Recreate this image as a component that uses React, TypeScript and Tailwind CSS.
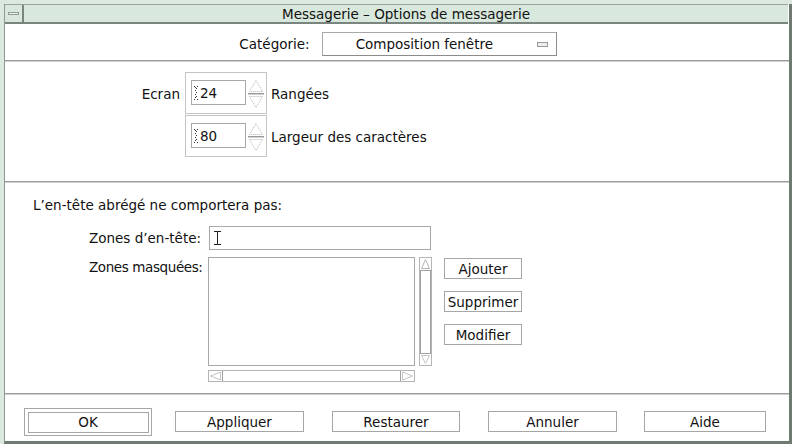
import React from 'react';

function Sep() {
  return (
    <div className="h-[2px] flex flex-col">
      <div className="h-px bg-[#9c9c9c]" />
      <div className="h-px bg-[#d0d0d0]" />
    </div>
  );
}

function Btn({ label, w, cls = '' }: { label: string; w: string; cls?: string }) {
  return (
    <div className={`${w} h-[21px] border border-[#a6a6a6] bg-white flex items-center justify-center leading-[16px] whitespace-nowrap ${cls}`}>
      {label}
    </div>
  );
}

function Caret() {
  return (
    <svg width="5" height="14" viewBox="0 0 5 14" className="shrink-0">
      <g fill="#333">
        <rect x="0" y="0" width="1" height="1" />
        <rect x="3" y="0" width="1" height="1" />
        <rect x="1" y="1" width="1" height="1" />
        <rect x="2" y="2" width="1" height="1" />
        <rect x="1" y="4" width="1" height="1" />
        <rect x="2" y="6" width="1" height="1" />
        <rect x="1" y="8" width="1" height="1" />
        <rect x="2" y="10" width="1" height="1" />
        <rect x="1" y="11" width="1" height="1" />
        <rect x="0" y="13" width="1" height="1" />
        <rect x="3" y="13" width="1" height="1" />
      </g>
    </svg>
  );
}

function Spinner({ value }: { value: string }) {
  return (
    <div className="w-[82px] h-[42px] border border-[#c4c4c4] flex items-start pt-[7px] pl-[5px]">
      <div className="w-[55px] h-[25px] border border-[#a8a8a8] flex items-center pl-[2px] gap-[1px] leading-[16px]">
        <Caret />
        <span>{value}</span>
      </div>
      <svg width="16" height="30" viewBox="0 0 16 30" className="ml-[2px] -mt-[1px]">
        <polygon points="8,1.5 1.5,12.5 14.5,12.5" fill="none" stroke="#b4b4b4" strokeDasharray="1 1" />
        <line x1="0" y1="14.5" x2="16" y2="14.5" stroke="#9a9a9a" />
        <line x1="0" y1="15.5" x2="16" y2="15.5" stroke="#d0d0d0" />
        <polygon points="1.5,17.5 14.5,17.5 8,28.5" fill="none" stroke="#b4b4b4" strokeDasharray="1 1" />
      </svg>
    </div>
  );
}

export default function App() {
  return (
    <div className="w-[792px] h-[444px] bg-[#dbe9de] pl-[4px] pt-[4px] font-['DejaVu_Sans',sans-serif] text-[13.5px] text-[#111] overflow-hidden">
      <div className="w-[788px] h-[440px] flex flex-col border-l border-[#8f9a93] border-r-[3px] border-r-[#6f7a73] border-b-[3px] border-b-[#6f7a73] bg-white">
        {/* title bar */}
        <div className="h-[20px] flex border-t border-[#9aa59e] border-b-2 border-b-[#7b857f] bg-[#d9e8dc] mr-[1px]">
          <div className="w-[19px] border-r-2 border-r-[#7b857f] flex items-center justify-center">
            <div className="w-[11px] h-[3px] border border-[#8f9a93] bg-[#eef5ef]" />
          </div>
          <div className="flex-1 flex items-center justify-center leading-[16px]">Messagerie – Options de messagerie</div>
        </div>

        {/* category */}
        <div className="h-[36px] flex items-start justify-center pt-[8px] pl-[2px]">
          <div className="h-[24px] flex items-center leading-[16px]">Catégorie:</div>
          <div className="ml-[12px] w-[235px] h-[24px] border border-[#a8a8a8] border-r-[#8c8c8c] border-b-[#8c8c8c] flex items-center leading-[16px]">
            <span className="ml-[33px]">Composition fenêtre</span>
            <div className="ml-auto mr-[8px] w-[11px] h-[5px] border border-[#9a9a9a] bg-[#eeeeee]" />
          </div>
        </div>
        <Sep />

        {/* screen */}
        <div className="h-[119px] flex flex-col pt-[10px]">
          <div className="flex items-center">
            <div className="w-[175px] text-right leading-[16px] pt-[2px]">Ecran</div>
            <div className="ml-[5px]"><Spinner value="24" /></div>
            <div className="ml-[4px] leading-[16px] pt-[2px]">Rangées</div>
          </div>
          <div className="flex items-center mt-[1px]">
            <div className="w-[175px]" />
            <div className="ml-[5px]"><Spinner value="80" /></div>
            <div className="ml-[4px] leading-[16px] pt-[2px]">Largeur des caractères</div>
          </div>
        </div>
        <Sep />

        {/* header options */}
        <div className="h-[210px] flex flex-col pt-[14px]">
          <div className="ml-[28px] leading-[16px]">L’en-tête abrégé ne comportera pas:</div>
          <div className="flex items-center mt-[13px]">
            <div className="ml-[84px] w-[119px] leading-[16px] whitespace-nowrap">Zones d’en-tête:</div>
            <div className="ml-[1px] w-[222px] h-[24px] border border-[#a8a8a8] flex items-center pl-[4px]">
              <svg width="7" height="14" viewBox="0 0 7 14">
                <g fill="#222">
                  <rect x="0" y="0" width="7" height="1" />
                  <rect x="3" y="0" width="1" height="14" />
                  <rect x="0" y="13" width="7" height="1" />
                </g>
              </svg>
            </div>
          </div>
          <div className="flex items-start mt-[7px]">
            <div className="ml-[84px] w-[119px] mt-[2px] leading-[16px] whitespace-nowrap tracking-[-0.4px]">Zones masquées:</div>
            <div className="flex flex-col">
              <div className="flex">
                <div className="w-[207px] h-[109px] border border-[#a8a8a8]" />
                <div className="ml-[4px] w-[13px] h-[109px] border border-[#b4b4b4] flex flex-col">
                  <svg width="11" height="12" viewBox="0 0 11 12">
                    <polygon points="5.5,1.5 1.5,10.5 9.5,10.5" fill="none" stroke="#b4b4b4" />
                  </svg>
                  <div className="flex-1 border-t border-b border-[#a0a0a0] border-l border-r" />
                  <svg width="11" height="11" viewBox="0 0 11 11">
                    <polygon points="1.5,1.5 9.5,1.5 5.5,9.5" fill="none" stroke="#c4c4c4" />
                  </svg>
                </div>
              </div>
              <div className="mt-[4px] w-[207px] h-[12px] border border-[#b4b4b4] flex">
                <svg width="13" height="10" viewBox="0 0 13 10">
                  <polygon points="1.5,5 11.5,1 11.5,9" fill="none" stroke="#c4c4c4" />
                </svg>
                <div className="flex-1 border-l border-r border-[#a0a0a0]" />
                <svg width="13" height="10" viewBox="0 0 13 10">
                  <polygon points="11.5,5 1.5,1 1.5,9" fill="none" stroke="#c4c4c4" />
                </svg>
              </div>
            </div>
            <div className="ml-[12px] flex flex-col mt-[1px]">
              <Btn label="Ajouter" w="w-[78px]" />
              <Btn label="Supprimer" w="w-[78px]" cls="mt-[12px]" />
              <Btn label="Modifier" w="w-[78px]" cls="mt-[12px]" />
            </div>
          </div>
        </div>
        <Sep />

        {/* bottom buttons */}
        <div className="flex-1 flex items-start pt-[13px]">
          <div className="ml-[19px] w-[128px] h-[28px] border border-[#a6a6a6] flex items-center justify-center">
            <Btn label="OK" w="w-[121px]" />
          </div>
          <Btn label="Appliquer" w="w-[129px]" cls="ml-[23px] mt-[3px]" />
          <Btn label="Restaurer" w="w-[128px]" cls="ml-[28px] mt-[3px]" />
          <Btn label="Annuler" w="w-[129px]" cls="ml-[28px] mt-[3px]" />
          <Btn label="Aide" w="w-[122px]" cls="ml-[27px] mt-[3px]" />
        </div>
      </div>
    </div>
  );
}
